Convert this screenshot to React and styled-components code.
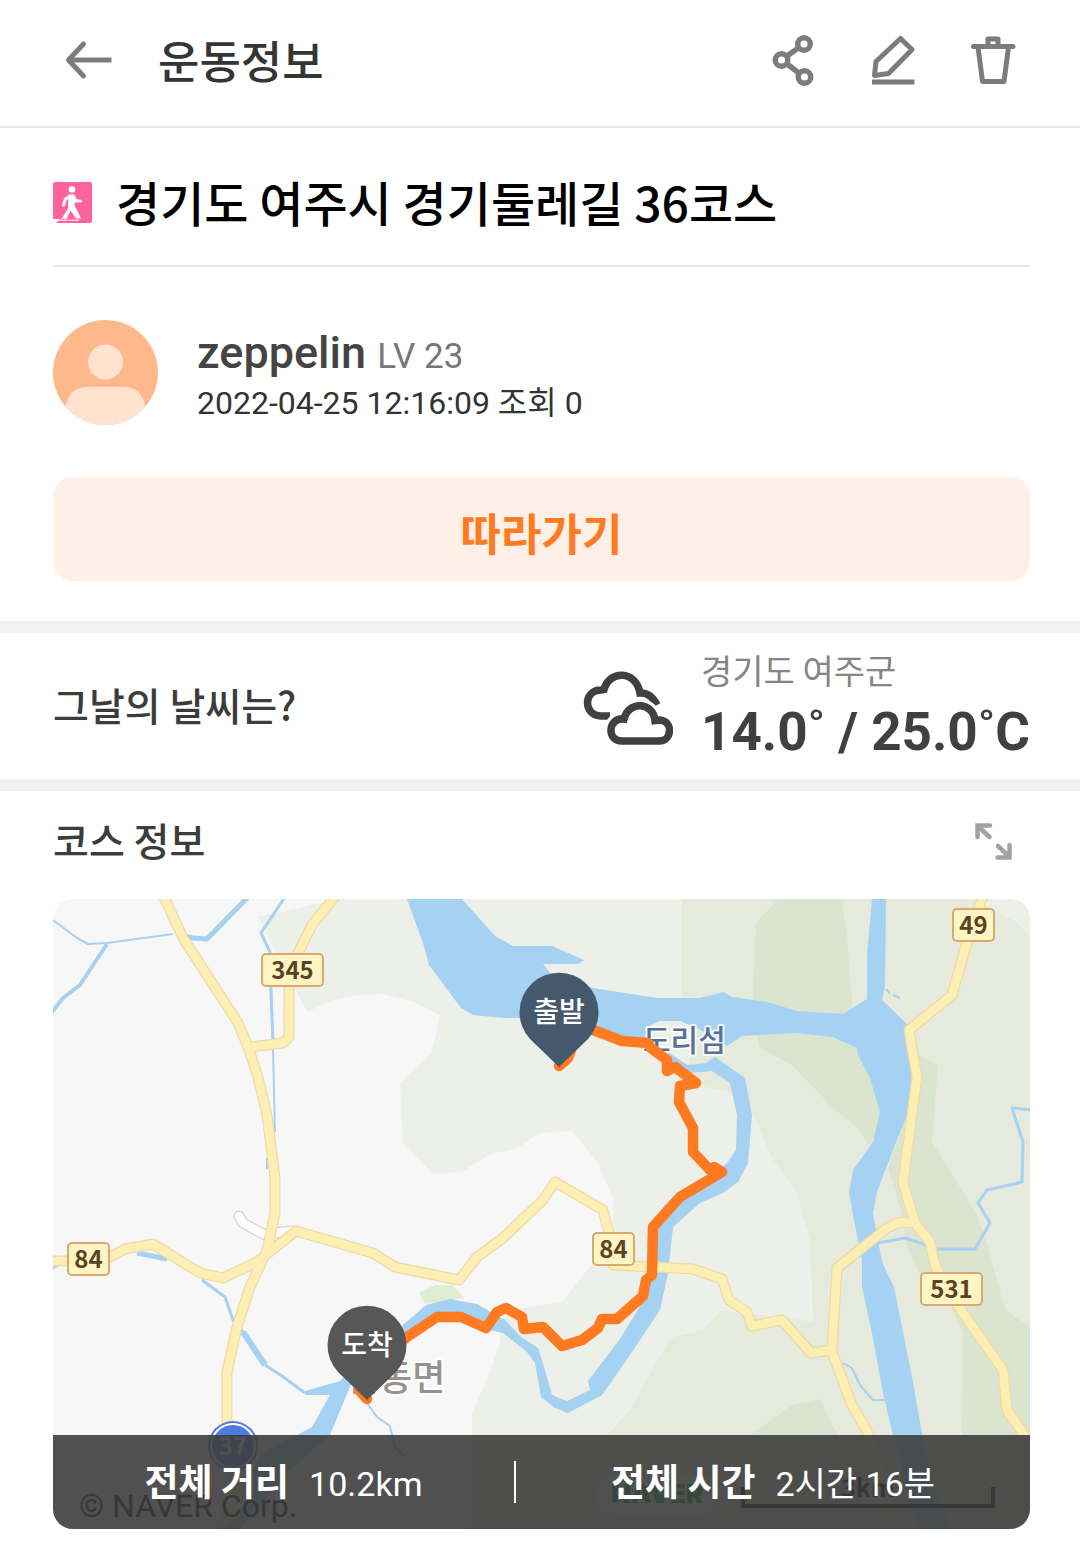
import React from "react";
import styled, { createGlobalStyle } from "styled-components";

const GlobalStyle = createGlobalStyle`
  * { box-sizing: border-box; }
  body {
    margin: 0;
    background: #fff;
    color: #3c3c3c;
    font-family: "Noto Sans CJK KR", sans-serif;
  }
  h1, h2, p, dl, dt, dd { margin: 0; font-weight: 500; }
`;

const latin = `Roboto, "Noto Sans CJK KR", sans-serif`;

const Header = styled.header`
  display: flex;
  align-items: center;
  height: 128px;
  padding: 0 58px 6px 60px;
  border-bottom: 2px solid #e7e7e7;
`;

const ScreenTitle = styled.h1`
  flex: 1;
  margin-left: 42px;
  font-size: 45px;
  line-height: 60px;
  color: #353535;
`;

const Actions = styled.div`
  display: flex;
  gap: 44px;
`;

const IconButton = styled.button`
  display: flex;
  align-items: center;
  justify-content: center;
  width: 56px;
  height: 56px;
  padding: 0;
  border: 0;
  background: none;
  color: ${(p) => p.$tone || "#7c7c7c"};
  cursor: pointer;
  svg { display: block; }
`;

const Section = styled.section`
  padding: 0 50px 0 53px;
`;

const CourseTitle = styled.div`
  display: flex;
  align-items: center;
  gap: 24px;
  height: 139px;
  padding-top: 12px;
  border-bottom: 2px solid #e7e7e7;
  h2 {
    padding-bottom: 4px;
    font-size: 48px;
    line-height: 64px;
    color: #000;
  }
`;

const Profile = styled.div`
  display: flex;
  align-items: center;
  gap: 39px;
  height: 210px;
`;

const Author = styled.div`
  padding-top: 8px;
  font-family: ${latin};
`;

const Nick = styled.p`
  font-size: 45px;
  line-height: 50px;
  color: #444;
  small {
    font-size: 35px;
    font-weight: 400;
    color: #777;
  }
`;

const Posted = styled.p`
  font-size: 32px;
  font-weight: 400;
  line-height: 42px;
  color: #333;
`;

const FollowButton = styled.button`
  display: block;
  width: 100%;
  height: 104px;
  margin-bottom: 40px;
  padding: 6px 0 0;
  border: 0;
  border-radius: 20px;
  background: #fff0e7;
  color: #ff7a21;
  font: inherit;
  font-size: 44px;
  font-weight: 700;
  cursor: pointer;
`;

const Divider = styled.hr`
  height: 12px;
  margin: 0;
  border: 0;
  background: #f1f2f4;
`;

const Weather = styled(Section)`
  display: flex;
  align-items: center;
  height: 146px;
`;

const SectionTitle = styled.h2`
  flex: 1;
  padding-bottom: 4px;
  font-size: 39px;
  line-height: 56px;
  color: #3c3c3c;
`;

const Reading = styled.div`
  margin-left: 28px;
  p:first-child {
    font-size: 34px;
    font-weight: 400;
    line-height: 48px;
    color: #858585;
  }
  p:last-child {
    padding-top: 4px;
    font-family: ${latin};
    font-size: 53px;
    font-weight: 700;
    line-height: 68px;
    color: #404040;
  }
`;

const CourseHead = styled.div`
  display: flex;
  align-items: center;
  height: 108px;
  padding: 0 8px 8px 0;
`;

const MapCard = styled.div`
  position: relative;
  overflow: hidden;
  margin-bottom: 23px;
  border-radius: 20px;
  > svg { display: block; width: 100%; height: auto; }
`;

const Totals = styled.dl`
  position: absolute;
  right: 0;
  bottom: 0;
  left: 0;
  display: grid;
  grid-template-columns: 461px 2px 1fr;
  align-items: center;
  height: 94px;
  background: rgba(61, 61, 61, 0.9);
  color: #fff;
`;

const Total = styled.div`
  display: flex;
  align-items: baseline;
  justify-content: center;
  gap: 20px;
  line-height: 50px;
  dt { font-size: 37px; font-weight: 700; }
  dd { font-family: ${latin}; font-size: 34px; font-weight: 400; }
`;

const Bar = styled.div`
  height: 42px;
  background: #fff;
`;

const BackIcon = () => (
  <svg width="56" height="56" viewBox="0 0 56 56" fill="none" stroke="currentColor" strokeWidth="5">
    <path d="M8 28H51.500" />
    <path d="M23.500 12L8.500 28L23.500 44" strokeLinecap="round" strokeLinejoin="round" />
  </svg>
);

const ShareIcon = () => (
  <svg width="56" height="56" viewBox="0 0 56 56" fill="none" stroke="currentColor" strokeWidth="5.400">
    <circle cx="38" cy="12" r="6.300" />
    <circle cx="15.500" cy="28" r="6.300" />
    <circle cx="38.500" cy="45" r="6.300" />
    <path d="M21 24L33 15.500M20.500 31.500L33.500 41.500" />
  </svg>
);

const EditIcon = () => (
  <svg width="56" height="56" viewBox="0 0 56 56" fill="none" stroke="currentColor" strokeWidth="5" strokeLinejoin="round">
    <path d="M34.500 6.500L46 17.500L22.500 41.500L8.500 43.500L10 29.500Z" />
    <path d="M6 50H48.500" />
  </svg>
);

const TrashIcon = () => (
  <svg width="56" height="56" viewBox="0 0 56 56" fill="none" stroke="currentColor" strokeWidth="5" strokeLinejoin="round">
    <path d="M7.500 14.500H47" strokeLinecap="round" />
    <path d="M22 14V7H32V14" />
    <path d="M12 15L16.500 49.500H38L42.500 15" />
  </svg>
);

const WalkIcon = () => (
  <svg width="39" height="41" viewBox="0 0 39 41">
    <path d="M2 0H37Q39 0 39 2V39Q39 41 37 41H3L7 37H0V2Q0 0 2 0Z" fill="#ff639d" />
    <circle cx="19" cy="7.500" r="3.300" fill="#fff" />
    <path
      d="M17.500 14L12.500 17L10.500 23M20 14L23 19L27.500 19"
      fill="none" stroke="#fff" strokeWidth="3" strokeLinecap="round" strokeLinejoin="round"
    />
    <path d="M15.500 12.500H21.500L23 17L21.500 23L28 36.500H23L17.500 28.500L13.500 37H8.500L15 26.500Z" fill="#fff" />
    <path d="M3 38.200H26" stroke="#fff" strokeWidth="1" />
  </svg>
);

const Avatar = () => (
  <svg width="105" height="105" viewBox="0 0 105 105" role="img" aria-label="zeppelin">
    <clipPath id="face"><circle cx="52.500" cy="52.500" r="52.500" /></clipPath>
    <g clipPath="url(#face)">
      <rect width="105" height="105" fill="#ffb78c" />
      <circle cx="52.500" cy="42" r="17.500" fill="#ffe2d0" />
      <path d="M13 105V86Q16 67 34 67H71Q89 67 92 86V105Z" fill="#ffe2d0" />
    </g>
  </svg>
);

const CloudIcon = () => (
  <svg width="90" height="78" viewBox="0 -4 90 78" fill="none">
    <g stroke="#404040" strokeWidth="7.500">
      <path d="M27 45H18C0 44.500 0 19 18 19L21 18.500C26 -1 53 -1 57 22C65 21.500 70 26 74 34" />
      <path
        d="M39 70H76C90 70 90 49 76 49L72 49.500C70 31 46 29 41 48C25 46 23 70 39 70Z"
        stroke="#fff" strokeWidth="14"
      />
      <path d="M39 70H76C90 70 90 49 76 49L72 49.500C70 31 46 29 41 48C25 46 23 70 39 70Z" />
    </g>
  </svg>
);

const ExpandIcon = () => (
  <svg width="44" height="44" viewBox="0 0 44 44" fill="none" stroke="currentColor" strokeWidth="4.500" strokeLinecap="round">
    <path d="M5.500 18V6.500H18M7 8L17.500 18" />
    <path d="M25.500 38.500H37.500V26M37 37.500L26 27" />
  </svg>
);

const ROADS = [
  "163,895 183,938 238,1023 248,1047 258,1077 267,1115 275,1178 275,1213 267,1250 250,1287 237,1327 227,1372 227,1427 232,1467 240,1500 220,1530",
  "336,895 312,925 297,955 289,985 289,1037 283,1043 250,1047",
  "50,1261 87,1261 108,1258 125,1249 153,1244 200,1273 223,1278 257,1262 296,1231 373,1253 395,1267 459,1280 477,1257 503,1238 543,1200 555,1182 603,1210 612,1245 613,1265 693,1269 722,1279 729,1300 747,1312 752,1326 782,1320 811,1353 832,1350",
  "868,1433 852,1405 832,1352 837,1268 887,1228 900,1222 915,1223",
  "868,1433 880,1463 883,1535",
  "983,895 967,943 952,995 909,1030 917,1077 903,1182 915,1223 930,1242 935,1265 947,1290 1003,1370 1007,1410 1028,1440 1040,1455",
];

const STREAMS = [
  [2, "53,920 77,938 88,944 107,943 173,934"],
  [5, "180,935 193,938 207,939 248,897"],
  [4, "107,944 80,985 63,998 52,1012"],
  [3, "285,897 261,933 270,952 271,992 273,1042"],
  [2, "271,985 273,1050 275,1132"],
  [2, "267,1158 267,1169"],
  [3, "53,1268 62,1262"],
  [5, "137,1253 167,1259"],
  [3, "202,1280 225,1297 233,1320 243,1332"],
  [6, "243,1332 265,1365"],
  [3, "265,1365 282,1376 305,1393"],
  [2, "367,1403 377,1417 390,1426 395,1447 405,1457"],
  [3, "1032,1110 1012,1108 1023,1142 1022,1182 987,1190 978,1203 990,1223 975,1249 938,1249 905,1238 878,1243"],
  [2, "843,1363 852,1368 860,1385 873,1400 887,1400"],
  [2, "886,989 890,994"],
  [2, "893,995 900,998"],
];

const BADGES = [
  ["345", 262, 954, 61],
  ["49", 953, 909, 41],
  ["84", 68, 1243, 41],
  ["84", 593, 1233, 41],
  ["531", 921, 1273, 61],
];

const Pin = ({ x, y, fill, children }) => (
  <g>
    <path d={`M${x - 29} ${y + 27}A39.500 39.500 0 1 1 ${x + 29} ${y + 27}L${x} ${y + 55}Z`} fill={fill} />
    <text x={x} y={y + 10} textAnchor="middle" fontSize="28" fontWeight="500" fill="#fff">{children}</text>
  </g>
);

const CourseMap = () => (
  <svg viewBox="53 899 977 630" role="img" aria-label="코스 지도" fontFamily='"Noto Sans CJK KR", sans-serif' strokeLinejoin="round">
    <rect x="53" y="899" width="977" height="630" fill="#f7f7f7" />
    <path fill="#edf0e9" d="M258 917L290 910L337 899H1030V1529H470L472 1413L488 1377L500 1343L498 1320L520 1308L562 1302L593 1263L613 1235V1198L597 1162L572 1131L540 1133L517 1148L488 1155L462 1172L433 1174L403 1143L400 1083L432 1053L440 1015L413 1002L383 994L357 995L333 1000L307 1012Z" />
    <path fill="#e5eadc" d="M682 899H970L997 912L1017 922L1030 937V1529H560L607 1435L630 1410L670 1338L703 1330L720 1311L782 1317L813 1322L810 1240L803 1215L797 1192L772 1158L755 1118L745 1095L700 1086L690 1080V1000H682Z" />
    <g fill="#dae4ce">
      <path d="M778 899L756 923L753 998L758 1038L760 1048L792 1065L833 1108L858 1128L869 1145L890 1110L852 1005L847 935L842 899Z" />
      <path d="M918 1055L938 1065L932 1142L977 1215L987 1243L1005 1310L1030 1327V1529H940L962 1433L963 1333L947 1297L920 1275L907 1247L900 1207L888 1168L907 1115Z" />
      <path d="M750 1435L792 1405L820 1399L833 1427L860 1460V1529H735Z" />
    </g>
    <path fill="#dfedd2" d="M419 1293L435 1285H452L465 1298L425 1304Z" />
    <g fill="#a5d1f2">
      <path d="M407 899L423 943L429 965L461 1008L473 1015L503 1018H530L597 1030L633 1040L650 1045L645 1028L660 1021L680 1021L697 1028L727 1046L742 1036L795 1033L833 1037L857 1048L858 1055L870 1078L880 1112L873 1142L853 1170L849 1192L853 1215L862 1260V1287L872 1333L883 1393L893 1435L917 1530H952L933 1483L922 1433L912 1377L894 1287L882 1262L873 1213L877 1192L888 1163L907 1115L912 1082L908 1025L882 1000L885 985L886 899H872L867 955V999L843 1014L797 1011L767 1002L732 997L723 992L700 998L657 998L593 988L550 973L543 964H578L584 960L552 946H513L495 936L462 899Z" />
      <path d="M668 1052L687 1065L706 1063L715 1057L745 1078L752 1115L748 1163L738 1182L723 1193L700 1203L673 1227L668 1273L660 1310L630 1355L602 1395L568 1413L555 1408L541 1397L535 1363L527 1352L503 1333L490 1330L460 1318H437L407 1337L352 1382L330 1435L290 1470L230 1540H215L262 1453L297 1435L312 1427L330 1395L305 1395V1391L340 1381L375 1347L403 1325L426 1305L450 1299L477 1304L505 1320L520 1336L538 1348L545 1370L552 1395L567 1401L590 1390L588 1381L620 1339L645 1298L652 1227L665 1205L700 1185L727 1163L736 1150L737 1115L730 1083L712 1071L690 1073L670 1066Z" />
    </g>
    <g fill="none" stroke="#a5d1f2">
      {STREAMS.map(([w, pts]) => <polyline key={pts} points={pts} strokeWidth={w} />)}
    </g>
    <g fill="none" strokeLinecap="round">
      <path d="M239 1216L243 1223L263 1234L293 1231" stroke="#d4d4d4" strokeWidth="11" />
      <path d="M239 1216L243 1223L263 1234L293 1231" stroke="#fff" strokeWidth="8.500" />
    </g>
    <g fill="none" stroke="#efd9a4" strokeWidth="11">
      {ROADS.map((pts) => <polyline key={pts} points={pts} />)}
    </g>
    <g fill="none" stroke="#fdeeb3" strokeWidth="8.600">
      {ROADS.map((pts) => <polyline key={pts} points={pts} />)}
    </g>
    <circle cx="233" cy="1446" r="25" fill="#4f7be0" />
    <circle cx="233" cy="1446" r="22" fill="#4f7be0" stroke="#fff" strokeWidth="2" />
    <text x="233" y="1455" textAnchor="middle" fontSize="24" fontWeight="700" fill="#fff">37</text>
    {BADGES.map(([label, x, y, w]) => (
      <g key={label + x}>
        <rect x={x} y={y} width={w} height="32" rx="4" fill="#fff5c4" stroke="#d9a970" strokeWidth="2" />
        <text x={x + w / 2} y={y + 25} textAnchor="middle" fontSize="24" fontWeight="700" fill="#5b4220">{label}</text>
      </g>
    ))}
    <g fontSize="30" stroke="#fff" strokeOpacity="0.8" strokeWidth="4" paintOrder="stroke" fontWeight="500">
      <text x="643" y="1051" fill="#56709a">도리섬</text>
      <text x="346" y="1391" fontSize="36" fill="#969290">점동면</text>
    </g>
    <text x="79" y="1517" fontFamily="Roboto, sans-serif" fontSize="32" fill="#000">© NAVER Corp.</text>
    <rect x="597" y="1475" width="122" height="39" rx="19" fill="#fff" />
    <text x="611" y="1503" fontFamily="Inter, sans-serif" fontSize="26" fontWeight="900" fill="#00a03c">NAVER</text>
    <path d="M743 1487V1506H993V1487" fill="none" stroke="#000" strokeWidth="4" />
    <text x="868" y="1497" textAnchor="middle" fontSize="25" fontWeight="700" fill="#000">3km</text>
    <polyline
      points="559,1066 568,1058 580,1025 596,1031 622,1041 648,1043 651,1048 667,1060 667,1071 675,1067 696,1083 680,1086 679,1102 693,1128 693,1152 710,1170 714,1167 722,1172 680,1197 653,1227 652,1275 646,1280 643,1296 617,1319 602,1319 598,1328 582,1340 562,1346 543,1327 524,1329 522,1317 506,1308 497,1312 486,1328 461,1317 437,1317 407,1337 360,1375 359,1390 367,1399"
      fill="none" stroke="#ff7a21" strokeWidth="10.500" strokeLinecap="round"
    />
    <Pin x={559} y={1012} fill="#45596d">출발</Pin>
    <Pin x={367} y={1345} fill="#575757">도착</Pin>
  </svg>
);

export default function App() {
  return (
    <>
      <GlobalStyle />
      <Header>
        <IconButton type="button" aria-label="뒤로"><BackIcon /></IconButton>
        <ScreenTitle>운동정보</ScreenTitle>
        <Actions>
          <IconButton type="button" aria-label="공유"><ShareIcon /></IconButton>
          <IconButton type="button" aria-label="편집"><EditIcon /></IconButton>
          <IconButton type="button" aria-label="삭제"><TrashIcon /></IconButton>
        </Actions>
      </Header>
      <main>
        <Section>
          <CourseTitle>
            <WalkIcon />
            <h2>경기도 여주시 경기둘레길 36코스</h2>
          </CourseTitle>
          <Profile>
            <Avatar />
            <Author>
              <Nick>zeppelin <small>LV 23</small></Nick>
              <Posted>2022-04-25 12:16:09 조회 0</Posted>
            </Author>
          </Profile>
          <FollowButton type="button">따라가기</FollowButton>
        </Section>
        <Divider />
        <Weather>
          <SectionTitle>그날의 날씨는?</SectionTitle>
          <CloudIcon />
          <Reading>
            <p>경기도 여주군</p>
            <p>14.0˚ / 25.0˚C</p>
          </Reading>
        </Weather>
        <Divider />
        <Section>
          <CourseHead>
            <SectionTitle>코스 정보</SectionTitle>
            <IconButton type="button" aria-label="지도 확대" $tone="#a2a2a2"><ExpandIcon /></IconButton>
          </CourseHead>
          <MapCard>
            <CourseMap />
            <Totals>
              <Total><dt>전체 거리</dt><dd>10.2km</dd></Total>
              <Bar />
              <Total><dt>전체 시간</dt><dd>2시간 16분</dd></Total>
            </Totals>
          </MapCard>
        </Section>
      </main>
    </>
  );
}
